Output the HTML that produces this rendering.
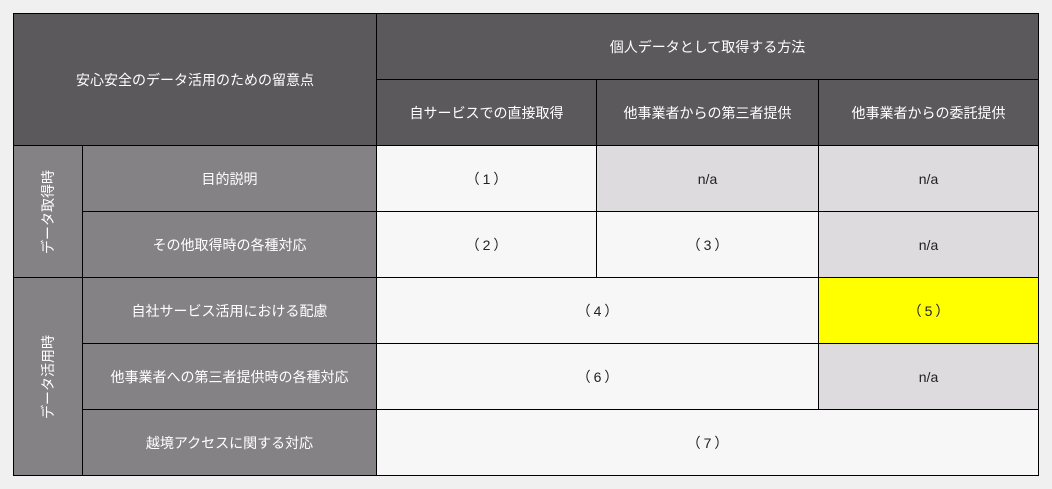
<!DOCTYPE html>
<html><head><meta charset="utf-8"><style>
body{margin:0;width:1052px;height:489px;background:#f0f0f0;position:relative;overflow:hidden;font-family:"Liberation Sans","Noto Sans CJK JP",sans-serif;font-size:14px}
.c{position:absolute;box-sizing:border-box;border:1px solid #000;display:flex;align-items:center;justify-content:center;text-align:center;color:#222}
.h{background:#5c595c;color:#fff}
.l{background:#858285;color:#fff}
.w{background:#f7f7f7}
.n{background:#dddbdd}
.y{background:#ffff00}
.v{transform:rotate(-90deg);white-space:nowrap}
.p{letter-spacing:3px;padding-left:3px}
</style></head><body>
<div class="c h" style="left:13px;top:13px;width:364px;height:133px">安心安全のデータ活用のための留意点</div>
<div class="c h" style="left:376px;top:13px;width:663px;height:67px">個人データとして取得する方法</div>
<div class="c h" style="left:376px;top:79px;width:221px;height:67px">自サービスでの直接取得</div>
<div class="c h" style="left:596px;top:79px;width:223px;height:67px">他事業者からの第三者提供</div>
<div class="c h" style="left:818px;top:79px;width:221px;height:67px">他事業者からの委託提供</div>

<div class="c l" style="left:13px;top:145px;width:70px;height:133px"><span class="v">データ取得時</span></div>
<div class="c l" style="left:13px;top:277px;width:70px;height:199px"><span class="v">データ活用時</span></div>

<div class="c l" style="left:82px;top:145px;width:295px;height:67px">目的説明</div>
<div class="c l" style="left:82px;top:211px;width:295px;height:67px">その他取得時の各種対応</div>
<div class="c l" style="left:82px;top:277px;width:295px;height:67px">自社サービス活用における配慮</div>
<div class="c l" style="left:82px;top:343px;width:295px;height:67px">他事業者への第三者提供時の各種対応</div>
<div class="c l" style="left:82px;top:409px;width:295px;height:67px">越境アクセスに関する対応</div>

<div class="c w" style="left:376px;top:145px;width:221px;height:67px"><span class="p">（1）</span></div>
<div class="c n" style="left:596px;top:145px;width:223px;height:67px">n/a</div>
<div class="c n" style="left:818px;top:145px;width:221px;height:67px">n/a</div>

<div class="c w" style="left:376px;top:211px;width:221px;height:67px"><span class="p">（2）</span></div>
<div class="c w" style="left:596px;top:211px;width:223px;height:67px"><span class="p">（3）</span></div>
<div class="c n" style="left:818px;top:211px;width:221px;height:67px">n/a</div>

<div class="c w" style="left:376px;top:277px;width:443px;height:67px"><span class="p">（4）</span></div>
<div class="c y" style="left:818px;top:277px;width:221px;height:67px"><span class="p">（5）</span></div>

<div class="c w" style="left:376px;top:343px;width:443px;height:67px"><span class="p">（6）</span></div>
<div class="c n" style="left:818px;top:343px;width:221px;height:67px">n/a</div>

<div class="c w" style="left:376px;top:409px;width:663px;height:67px"><span class="p">（7）</span></div>
</body></html>
